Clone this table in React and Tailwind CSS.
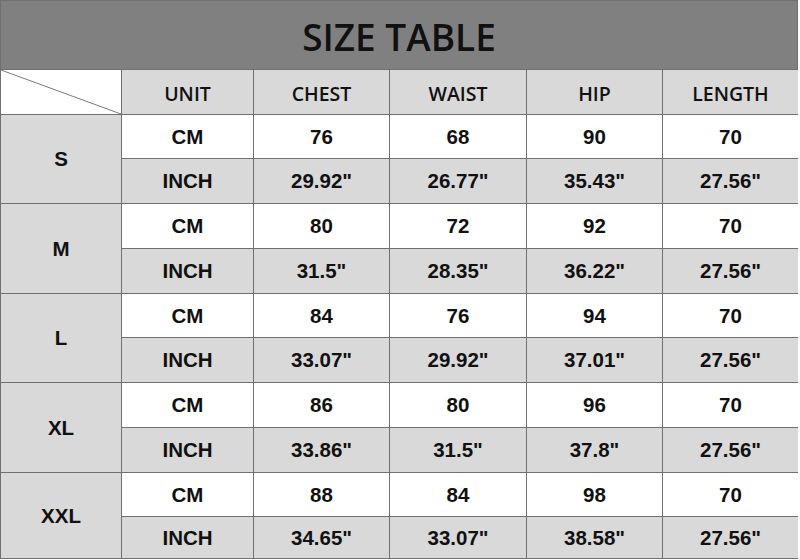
const rows = [
  { size: "S", cm: ["76", "68", "90", "70"], inch: ['29.92"', '26.77"', '35.43"', '27.56"'] },
  { size: "M", cm: ["80", "72", "92", "70"], inch: ['31.5"', '28.35"', '36.22"', '27.56"'] },
  { size: "L", cm: ["84", "76", "94", "70"], inch: ['33.07"', '29.92"', '37.01"', '27.56"'] },
  { size: "XL", cm: ["86", "80", "96", "70"], inch: ['33.86"', '31.5"', '37.8"', '27.56"'] },
  { size: "XXL", cm: ["88", "84", "98", "70"], inch: ['34.65"', '33.07"', '38.58"', '27.56"'] },
];

const heads = ["UNIT", "CHEST", "WAIST", "HIP", "LENGTH"];

const cell = "flex items-center justify-center font-['Liberation_Sans',Arial,sans-serif] font-bold text-[20.5px] pt-px";

export default function App() {
  return (
    <div className="w-[800px] h-[560px] bg-white">
      <div className="w-[798px] border border-[#707070] bg-[#707070]">
        <div className="h-[68px] bg-[#808080] flex items-center justify-center font-['Open_Sans',sans-serif] font-semibold text-[37px] text-[#111] pt-1">
          SIZE TABLE
        </div>

        <div className="mt-px grid grid-cols-[120px_131px_135px_136px_135px_135px] grid-rows-[44px_43px_44px_44px_44px_43px_44px_44px_44px_43px_41px] gap-px text-[#111]">
          <div className="bg-white relative">
            <svg className="absolute inset-0" width="120" height="44">
              <line x1="0" y1="0" x2="120" y2="44" stroke="#7a7a7a" strokeWidth="1" />
            </svg>
          </div>
          {heads.map((h) => (
            <div key={h} className="bg-[#d9d9d9] flex items-center justify-center font-['Open_Sans',sans-serif] font-semibold text-[19.5px] pt-1">
              {h}
            </div>
          ))}

          {rows.map((r) => (
            <>
              <div key={r.size} className={"row-span-2 bg-[#d9d9d9] " + cell}>
                {r.size}
              </div>
              <div className={"bg-white " + cell}>CM</div>
              {r.cm.map((v, i) => (
                <div key={"c" + i} className={"bg-white " + cell}>
                  {v}
                </div>
              ))}
              <div className={"bg-[#d9d9d9] " + cell}>INCH</div>
              {r.inch.map((v, i) => (
                <div key={"i" + i} className={"bg-[#d9d9d9] " + cell}>
                  {v}
                </div>
              ))}
            </>
          ))}
        </div>
      </div>
    </div>
  );
}
